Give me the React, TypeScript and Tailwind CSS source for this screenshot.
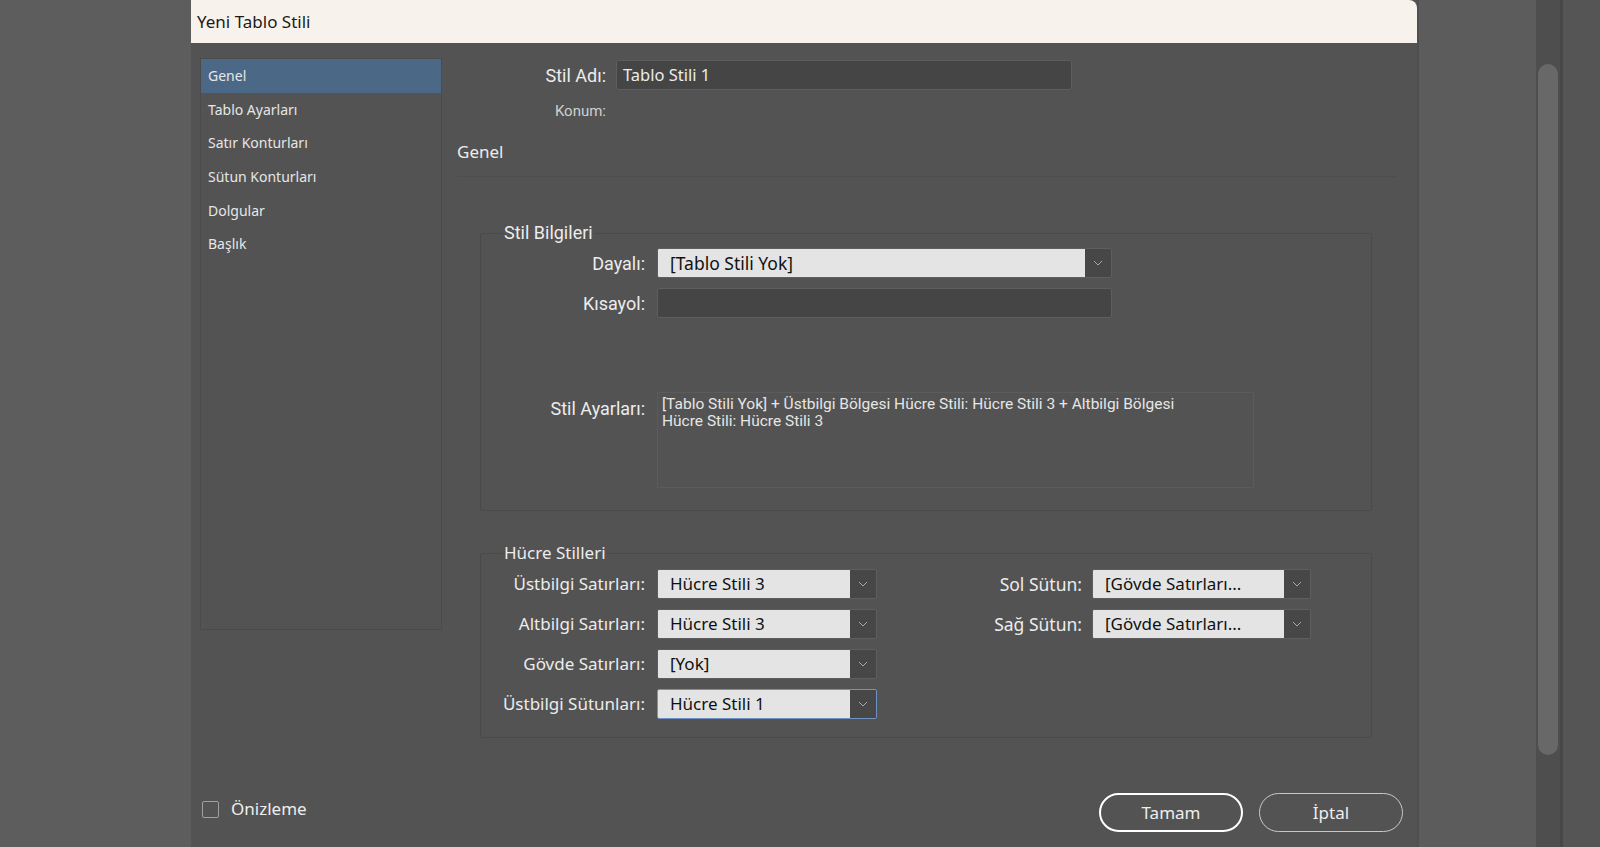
import React from "react";

const sidebarItems = ["Genel", "Tablo Ayarları", "Satır Konturları", "Sütun Konturları", "Dolgular", "Başlık"];

const leftCells = [
  { label: "Üstbilgi Satırları:", value: "Hücre Stili 3" },
  { label: "Altbilgi Satırları:", value: "Hücre Stili 3" },
  { label: "Gövde Satırları:", value: "[Yok]" },
  { label: "Üstbilgi Sütunları:", value: "Hücre Stili 1", focused: true },
];

const rightCells = [
  { label: "Sol Sütun:", value: "[Gövde Satırları..." },
  { label: "Sağ Sütun:", value: "[Gövde Satırları..." },
];

const segoe = "font-['Noto_Sans',_'Open_Sans',_sans-serif]";
const myriad = "font-['Roboto',_'Liberation_Sans',_sans-serif]";

function Chevron() {
  return (
    <svg width="10" height="6" viewBox="0 0 10 6" fill="none">
      <path d="M1 1l4 4 4-4" stroke="#a8a8a8" strokeWidth="1" />
    </svg>
  );
}

function Select({ value, width, focused, className }: { value: string; width: string; focused?: boolean; className?: string }) {
  return (
    <div
      className={`flex h-[30px] ${width} rounded-[2px] border ${focused ? "border-[#6f93c4]" : "border-[#5e5e5e]"} overflow-hidden`}
    >
      <div className={`flex-1 bg-[#e4e4e4] text-[#111] pl-[12px] flex items-center ${segoe} ${className ?? ""}`}>{value}</div>
      <div className="w-[26px] bg-[#474747] flex items-center justify-center">
        <Chevron />
      </div>
    </div>
  );
}

export default function App() {
  return (
    <div className="w-[1600px] h-[847px] overflow-hidden flex bg-[#5d5d5d]">
      <div className="w-[191px] shrink-0" />

      {/* dialog */}
      <div className="w-[1228px] shrink-0 h-full flex flex-col bg-[#535353] border-r-2 border-[#4f4f4f]">
        <div className={`h-[43px] bg-[#f8f2ec] rounded-tr-[8px] flex items-center pl-[6px] text-[17px] text-[#1b1b1b] ${segoe}`}>
          Yeni Tablo Stili
        </div>

        <div className="flex h-[750px]">
          {/* sidebar */}
          <div className="ml-[9px] mt-[15px] w-[242px] h-[572px] border border-[#4b4b4b] flex flex-col">
            {sidebarItems.map((item, i) => (
              <div
                key={item}
                className={`h-[33.6px] flex items-center pl-[7px] text-[14px] text-[#e6e6e6] ${segoe} ${i === 0 ? "bg-[#4b6887]" : ""}`}
              >
                {item}
              </div>
            ))}
          </div>

          {/* content */}
          <div className={`ml-[15px] w-[939px] flex flex-col text-[#ececec] ${myriad}`}>
            <div className="mt-[17px] flex items-center h-[30px]">
              <div className="w-[149px] text-right text-[18px]">Stil Adı:</div>
              <div className={`ml-[10px] w-[456px] h-[30px] bg-[#454545] border border-[#5e5e5e] rounded-[2px] flex items-center pl-[6px] text-[16.5px] ${segoe}`}>
                Tablo Stili 1
              </div>
            </div>
            <div className="mt-[11px] flex items-center h-[20px]">
              <div className="w-[149px] text-right text-[15px] text-[#cfcfcf]">Konum:</div>
            </div>
            <div className={`mt-[20px] h-[22px] flex items-center text-[17px] ${segoe}`}>Genel</div>
            <div className="mt-[13px] h-px bg-[#4d4d4d]" />

            {/* Stil Bilgileri */}
            <fieldset className="mt-[45px] ml-[23px] w-[892px] h-[289px] border border-[#4a4a4a] rounded-[2px]">
              <legend className="ml-[22px] px-[1px] text-[18px] leading-[22px]">Stil Bilgileri</legend>
              <div className="mt-[4px] grid grid-cols-[164px_auto] gap-x-[12px] gap-y-[10px] items-center">
                <div className="text-right text-[18px]">Dayalı:</div>
                <Select value="[Tablo Stili Yok]" width="w-[455px]" className="text-[17.5px]" />
                <div className="text-right text-[18px]">Kısayol:</div>
                <div className="w-[455px] h-[30px] bg-[#454545] border border-[#5e5e5e] rounded-[2px]" />
                <div className="self-start text-right text-[18px] mt-[67px]">Stil Ayarları:</div>
                <div className="mt-[64px] w-[597px] h-[96px] border border-[#5b5b5b] px-[4px] pt-[3px] text-[15.5px] leading-[17px] text-[#e6e6e6]">
                  [Tablo Stili Yok] + Üstbilgi Bölgesi Hücre Stili: Hücre Stili 3 + Altbilgi Bölgesi
                  <br />
                  Hücre Stili: Hücre Stili 3
                </div>
              </div>
            </fieldset>

            {/* Hücre Stilleri */}
            <fieldset className={`mt-[31px] ml-[23px] w-[892px] h-[196px] border border-[#4a4a4a] rounded-[2px] ${segoe}`}>
              <legend className="ml-[22px] px-[1px] text-[17px] leading-[22px]">Hücre Stilleri</legend>
              <div className="flex mt-[5px]">
                <div className="grid grid-cols-[164px_220px] gap-x-[12px] gap-y-[10px] items-center">
                  {leftCells.map((c) => (
                    <React.Fragment key={c.label}>
                      <div className="text-right text-[17px]">{c.label}</div>
                      <Select value={c.value} width="w-[220px]" focused={c.focused} className="text-[17px]" />
                    </React.Fragment>
                  ))}
                </div>
                <div className="grid grid-cols-[205px_219px] gap-x-[10px] gap-y-[10px] items-start content-start">
                  {rightCells.map((c) => (
                    <React.Fragment key={c.label}>
                      <div className="text-right text-[17.5px] h-[30px] flex items-center justify-end">{c.label}</div>
                      <Select value={c.value} width="w-[219px]" className="text-[17px]" />
                    </React.Fragment>
                  ))}
                </div>
              </div>
            </fieldset>
          </div>
        </div>

        {/* footer */}
        <div className={`flex items-start h-[39px] ${segoe}`}>
          <div className="ml-[11px] mt-[7px] flex items-center">
            <div className="w-[17px] h-[17px] border-[1.5px] border-[#a0a0a0] rounded-[2px]" />
            <span className="ml-[12px] text-[17px] text-[#eeeeee] leading-[18px]">Önizleme</span>
          </div>
          <div className="ml-auto mr-[14px] flex gap-[16px]">
            <button className="w-[144px] h-[39px] rounded-full border-2 border-white text-[17px] text-[#eeeeee]">Tamam</button>
            <button className="w-[144px] h-[39px] rounded-full border border-[#c8c8c8] text-[17px] text-[#eeeeee]">İptal</button>
          </div>
        </div>
      </div>

      {/* background area with scrollbar */}
      <div className="flex-1 flex">
        <div className="w-[117px] bg-[#5c5c5c]" />
        <div className="w-[24px] bg-[#4e4e4e] pt-[64px] px-[2px]">
          <div className="h-[691px] rounded-full bg-[#686868]" />
        </div>
        <div className="w-[3px] bg-[#474747]" />
        <div className="flex-1 bg-[#555555]" />
      </div>
    </div>
  );
}
